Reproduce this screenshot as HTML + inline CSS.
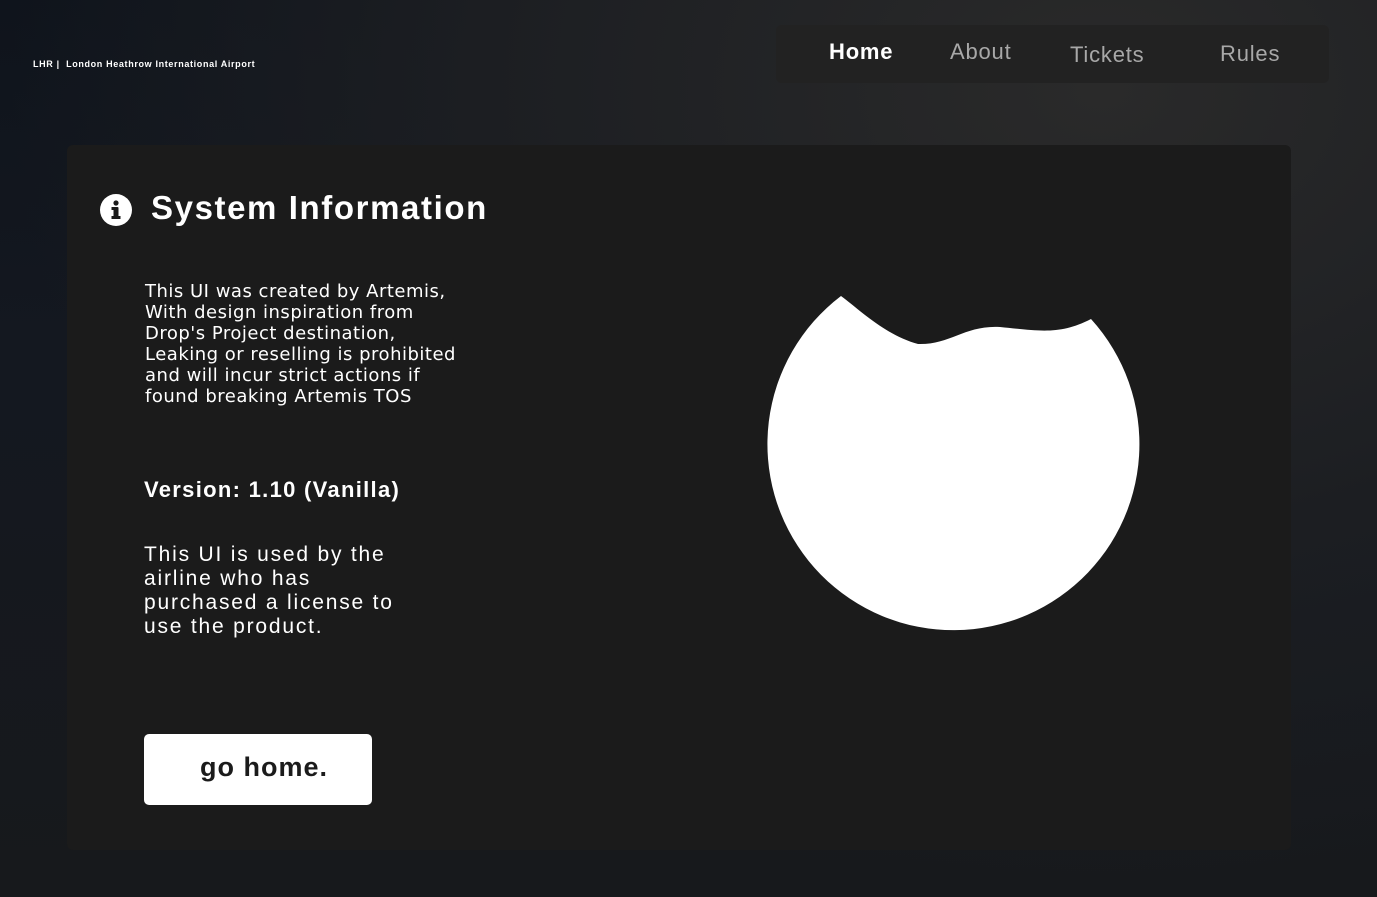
<!DOCTYPE html>
<html><head><meta charset="utf-8"><style>
html,body{margin:0;padding:0}
body{width:1377px;height:897px;overflow:hidden;position:relative;font-family:"Liberation Sans",sans-serif;
background:radial-gradient(ellipse at 80% 10%,#2a2a2a 0%,#1c1e22 40%,transparent 70%),linear-gradient(180deg,#0f141c 0%,#141820 40%,#17191c 100%);color:#fff}
.brand{position:absolute;left:33px;top:59px;font-size:9px;font-weight:bold;letter-spacing:0.65px}
.nav{position:absolute;left:776px;top:25px;width:553px;height:58px;background:#222;border-radius:6px}
.nav span{position:absolute;font-size:22px;color:#a8a8a8;top:15px;letter-spacing:0.8px}
.panel{position:absolute;left:67px;top:145px;width:1224px;height:705px;background:#1b1b1b;border-radius:6px}
.icon{position:absolute;left:100px;top:194px}
h1{position:absolute;left:151px;top:189px;margin:0;font-size:33px;font-weight:bold;letter-spacing:1.6px}
.p1{position:absolute;left:145px;top:281px;font-size:18px;line-height:21px;letter-spacing:0.5px;font-family:"DejaVu Sans",sans-serif}
.ver{position:absolute;left:144px;top:477px;font-size:22px;font-weight:bold;letter-spacing:1.3px}
.p2{position:absolute;left:144px;top:543px;font-size:21px;line-height:24px;letter-spacing:1.8px}
.btn{position:absolute;left:144px;top:734px;width:228px;height:71px;background:#fff;border-radius:5px;color:#1b1b1b;font-size:27px;font-weight:bold;text-align:center;line-height:66px;letter-spacing:1px;text-indent:12px}
</style></head><body>
<div class="brand">LHR |&nbsp; London Heathrow International Airport</div>
<div class="nav">
<span style="left:53px;color:#fff;font-weight:bold;top:14px">Home</span>
<span style="left:174px;top:14px">About</span>
<span style="left:294px;top:17px">Tickets</span>
<span style="left:444px;top:16px">Rules</span>
</div>
<div class="panel"></div>
<svg class="icon" width="32" height="32" viewBox="0 0 32 32"><circle cx="16" cy="16" r="16" fill="#fff"/><circle cx="16" cy="9" r="2.6" fill="#1b1b1b"/><rect x="13.5" y="13" width="5" height="12" rx="1" fill="#1b1b1b"/><rect x="11.5" y="13" width="6" height="3" fill="#1b1b1b"/><rect x="11.5" y="22" width="9" height="3" fill="#1b1b1b"/></svg>
<h1>System Information</h1>
<div class="p1">This UI was created by Artemis,<br>With design inspiration from<br>Drop's Project destination,<br>Leaking or reselling is prohibited<br>and will incur strict actions if<br>found breaking Artemis TOS</div>
<div class="ver">Version: 1.10 (Vanilla)</div>
<div class="p2">This UI is used by the<br>airline who has<br>purchased a license to<br>use the product.</div>
<div class="btn">go home.</div>
<svg style="position:absolute;left:0;top:0" width="1377" height="897"><path d="M841,296 C860,310 885,335 918,344 C950,345 965,325 1000,327 C1040,331 1060,335 1091,319 A186,186 0 1 1 841,296 Z" fill="#fff"/></svg>
</body></html>
